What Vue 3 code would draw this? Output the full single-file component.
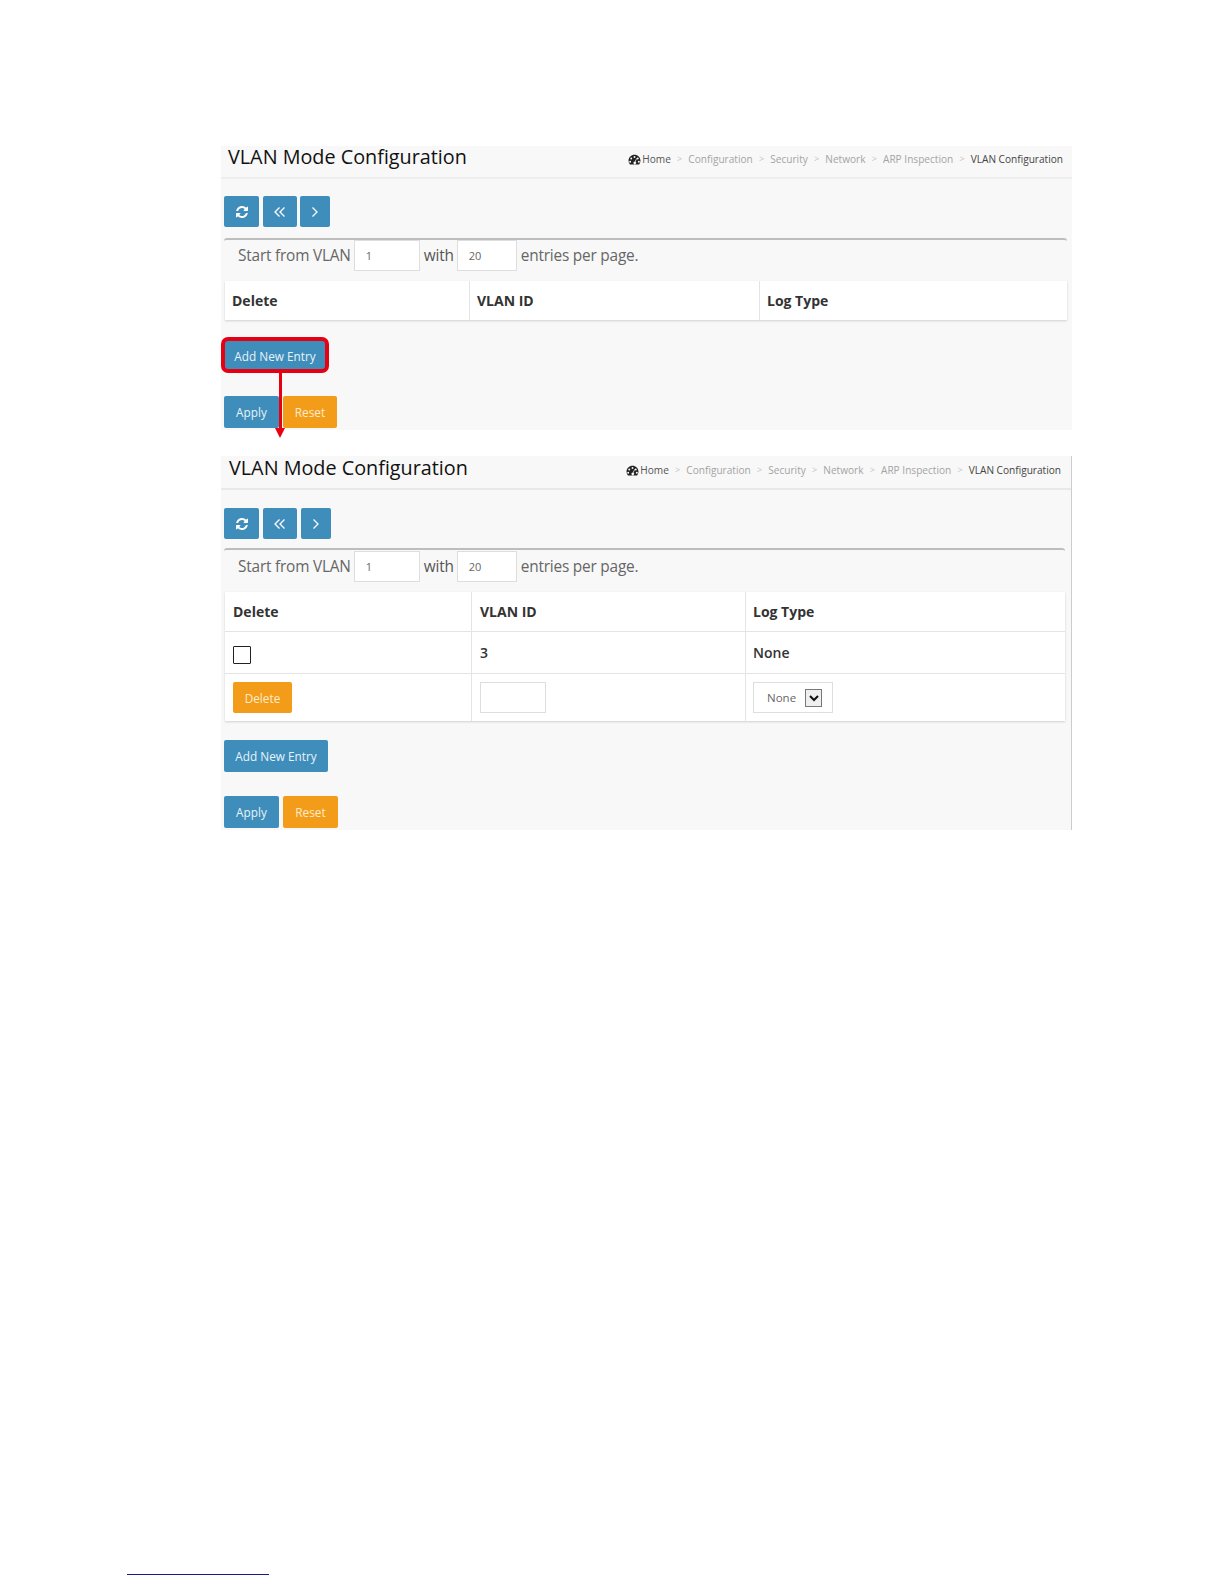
<script setup>
const crumbs = ['Configuration', 'Security', 'Network', 'ARP Inspection']
const panels = [
  { id: 'first', rows: false },
  { id: 'second', rows: true },
]
</script>

<template>
  <main class="page">
    <section v-for="panel in panels" :key="panel.id" class="panel" :class="panel.id">
      <header class="head">
        <h1>VLAN Mode Configuration</h1>
        <nav class="crumbs">
          <svg class="gauge" viewBox="0 0 24 24" aria-hidden="true">
            <path fill-rule="evenodd" d="M12 3C6 3 1 7.8 1 14c0 2.500.8 4.800 2.200 6.600.3.300.6.400 1 .4h15.600c.4 0 .7-.1 1-.4C22.200 18.800 23 16.500 23 14 23 7.800 18 3 12 3zM12 5.500a1.800 1.800 0 1 1 0 3.600 1.800 1.800 0 0 1 0-3.600zM6 8.200a1.800 1.800 0 1 1 0 3.600 1.800 1.800 0 0 1 0-3.600zM4 14.200a1.800 1.800 0 1 1 0 3.600 1.800 1.800 0 0 1 0-3.600zM20 14.200a1.800 1.800 0 1 1 0 3.600 1.800 1.800 0 0 1 0-3.600zM18 8.200a1.800 1.800 0 1 1 0 3.600 1.800 1.800 0 0 1 0-3.600zM15.400 9.500l1.100.5-2.600 6a2.500 2.500 0 1 1-1.200-.4z" />
          </svg>
          <span class="home">Home</span>
          <template v-for="c in crumbs" :key="c">
            <span class="sep">&gt;</span>
            <span class="crumb">{{ c }}</span>
          </template>
          <span class="sep">&gt;</span>
          <span class="current">VLAN Configuration</span>
        </nav>
      </header>

      <div class="toolbar">
        <button class="btn blue tool refresh" aria-label="Refresh">
          <svg viewBox="0 0 1792 1792" aria-hidden="true">
            <path fill="#fff" d="M1639 1056q0 5-1 7-64 268-268 434.500t-478 166.500q-146 0-282.500-55t-243.500-157l-129 129q-19 19-45 19t-45-19-19-45v-448q0-26 19-45t45-19h448q26 0 45 19t19 45-19 45l-137 137q71 66 161 102t187 36q134 0 250-65t186-179q11-17 53-117 8-23 30-23h192q13 0 22.500 9.500t9.500 22.500zm25-800v448q0 26-19 45t-45 19h-448q-26 0-45-19t-19-45 19-45l138-138q-148-137-349-137-134 0-250 65t-186 179q-11 17-53 117-8 23-30 23h-199q-13 0-22.500-9.500t-9.500-22.500v-7q65-268 270-434.500t480-166.500q146 0 284 55.500t245 156.500l130-129q19-19 45-19t45 19 19 45z" />
          </svg>
        </button>
        <button class="btn blue tool prev" aria-label="First page">
          <svg class="chev" viewBox="0 0 12 12" aria-hidden="true">
            <path d="M5.500 1.500 1 6l4.500 4.500M10.500 1.500 6 6l4.500 4.500" />
          </svg>
        </button>
        <button class="btn blue tool next" aria-label="Next page">
          <svg class="chev" viewBox="0 0 12 12" aria-hidden="true">
            <path d="M3.500 1.500 8 6l-4.500 4.500" />
          </svg>
        </button>
      </div>

      <div class="content">
        <div class="paging">
          <span class="lead">Start from VLAN</span>
          <span class="field start">1</span>
          <span class="with">with</span>
          <span class="field count">20</span>
          <span class="tail">entries per page.</span>
        </div>

        <div class="table">
          <div class="row top">
            <div class="cell c1"><b>Delete</b></div>
            <div class="cell c2"><b>VLAN ID</b></div>
            <div class="cell c3"><b>Log Type</b></div>
          </div>
          <template v-if="panel.rows">
            <div class="row data">
              <div class="cell c1"><span class="check"></span></div>
              <div class="cell c2 value">3</div>
              <div class="cell c3 value">None</div>
            </div>
            <div class="row edit">
              <div class="cell c1"><button class="btn orange del">Delete</button></div>
              <div class="cell c2"><span class="field vid"></span></div>
              <div class="cell c3">
                <span class="field select">
                  <span>None</span>
                  <span class="drop">
                    <svg viewBox="0 0 12 12" aria-hidden="true"><path d="M2 4l4 4 4-4" /></svg>
                  </span>
                </span>
              </div>
            </div>
          </template>
        </div>
      </div>

      <div class="add-wrap">
        <button class="btn blue add">Add New Entry</button>
      </div>
      <div class="actions">
        <button class="btn blue apply">Apply</button>
        <button class="btn orange reset">Reset</button>
      </div>

      <div v-if="panel.id === 'first'" class="callout" aria-hidden="true">
        <span class="ring"></span>
        <span class="shaft"></span>
        <span class="tip"></span>
      </div>
    </section>
    <footer class="foot"><span class="rule"></span></footer>
  </main>
</template>

<style>
html, body { margin: 0; background: #fff; }
</style>

<style scoped>
.page {
  position: relative;
  width: 1224px;
  height: 1584px;
  box-sizing: border-box;
  padding: 146px 0 0 221px;
  font-family: "Open Sans", "Noto Sans", sans-serif;
  overflow: hidden;
  background: #fff;
}
.panel {
  position: relative;
  width: 851px;
  background: #f8f8f8;
  box-sizing: border-box;
}
.first { height: 284px; }
.second { height: 374px; margin-top: 26px; border-right: 1px solid #ccc; }

.head {
  display: flex;
  justify-content: space-between;
  align-items: flex-start;
  height: 33px;
  box-sizing: border-box;
  padding: 1px 9px 0 7px;
  border-bottom: 2px solid #eeeeee;
}
.second .head { height: 34px; padding: 2px 10px 0 8px; border-bottom-color: #e8e8e8; }
h1 {
  margin: 0;
  font-size: 19.800px;
  font-weight: 400;
  color: #111;
  line-height: 20px;
}
.crumbs {
  display: flex;
  align-items: center;
  margin-top: 5px;
  font-size: 10.100px;
  line-height: 14px;
  color: #a4a4a4;
}
.gauge { width: 13px; height: 13px; margin-right: 1px; fill: #222; }
.home { color: #555; }
.current { color: #444; }
.sep { width: 17.500px; text-align: center; color: #c4c4c4; font-size: 9px; }

.toolbar { display: flex; gap: 4px; padding: 17px 0 0 3px; }
.second .toolbar { padding-top: 18px; }
.btn {
  display: flex;
  align-items: center;
  justify-content: center;
  box-sizing: border-box;
  border: 0;
  padding: 0;
  border-radius: 2px;
  font-family: inherit;
  font-size: 11.800px;
  color: #fff;
}
.blue { background: #3e8dbb; color: #e8f3f8; }
.orange { background: #f39c1a; color: #fdeccd; }
.tool { height: 31px; }
.refresh { width: 35px; }
.prev { width: 34px; }
.next { width: 30px; margin-left: -1px; }
.second .next { margin-left: 0; }
.refresh svg { width: 14px; height: 14px; }
.chev { width: 12px; height: 12px; fill: none; stroke: #fff; stroke-width: 1.300; }

.content { margin: 11px 5px 0 3px; }
.second .content { margin: 9px 6px 0 3px; }
.paging {
  display: flex;
  align-items: flex-start;
  height: 40px;
  padding: 0 0 0 14px;
  box-sizing: border-box;
  border-top: 2px solid #bdbdbd;
  border-radius: 3px 3px 0 0;
  font-size: 15.400px;
  line-height: 31px;
  color: #666;
  letter-spacing: -0.200px;
  margin-bottom: 3px;
}
.second .paging { margin-bottom: 4px; padding-top: 1px; }
.field {
  display: flex;
  align-items: center;
  box-sizing: border-box;
  height: 31px;
  background: #fff;
  border: 1px solid #dedede;
  font-size: 11px;
  letter-spacing: 0;
  color: #666;
}
.start { width: 66px; margin: 0 4px 0 3px; padding-left: 11px; }
.with { color: #555; }
.count { width: 60px; margin: 0 4px 0 3px; padding-left: 11px; }

.table {
  background: #fff;
  margin-left: 1px;
  box-shadow: 0 1px 2px #d0d0d0;
}
.row { display: flex; }
.top { height: 39px; }
.data { height: 42px; border-top: 1px solid #e4e4e4; box-sizing: border-box; }
.edit { height: 48px; border-top: 1px solid #e4e4e4; box-sizing: border-box; }
.cell {
  box-sizing: border-box;
  display: flex;
  align-items: center;
  padding-left: 7px;
  font-size: 14px;
  color: #333;
}
.cell + .cell { border-left: 1px solid #e4e4e4; }
.c1 { width: 244px; }
.c2 { width: 290px; }
.c3 { flex: 1; }
.second .c1 { width: 246px; padding-left: 8px; }
.second .c2 { width: 274px; padding-left: 8px; }
.second .c3 { padding-left: 7px; }
b { font-weight: 700; }
.value { font-weight: 600; }
.check {
  width: 18px;
  height: 18px;
  box-sizing: border-box;
  border: 1.500px solid #222;
  background: #fff;
  border-radius: 1px;
  margin-top: 4px;
}
.del { width: 59px; height: 31px; }
.vid { width: 66px; height: 31px; }
.select {
  width: 80px;
  height: 31px;
  padding-left: 13px;
  justify-content: flex-start;
  font-size: 11.500px;
}
.drop {
  display: flex;
  align-items: center;
  justify-content: center;
  width: 17px;
  height: 18px;
  margin-left: 9px;
  box-sizing: border-box;
  background: #efefef;
  border: 1px solid #777;
}
.drop svg { width: 12px; height: 12px; fill: none; stroke: #111; stroke-width: 2; }

.add-wrap { padding: 20px 0 0 3px; }
.add { width: 102px; height: 31px; }
.second .add-wrap { padding-top: 19px; }
.second .add { width: 104px; height: 32px; }
.actions { display: flex; gap: 4px; padding: 25px 0 0 3px; }
.second .actions { padding-top: 24px; }
.apply { width: 55px; height: 32px; }
.reset { width: 54px; height: 32px; }
.second .reset { width: 55px; }

.callout { position: absolute; left: 0; top: 0; pointer-events: none; }
.ring {
  position: absolute;
  left: 0;
  top: 191px;
  width: 108px;
  height: 36px;
  box-sizing: border-box;
  border: 4px solid #e60012;
  border-radius: 7px;
}
.shaft {
  position: absolute;
  left: 58px;
  top: 227px;
  width: 3px;
  height: 56px;
  background: #e60012;
}
.tip {
  position: absolute;
  left: 54px;
  top: 282px;
  width: 0;
  height: 0;
  border-left: 5.500px solid transparent;
  border-right: 5.500px solid transparent;
  border-top: 10px solid #e60012;
}
.foot { position: absolute; left: 127px; top: 1574px; }
.rule { display: block; width: 142px; height: 1px; background: #1a1a8c; }
</style>
